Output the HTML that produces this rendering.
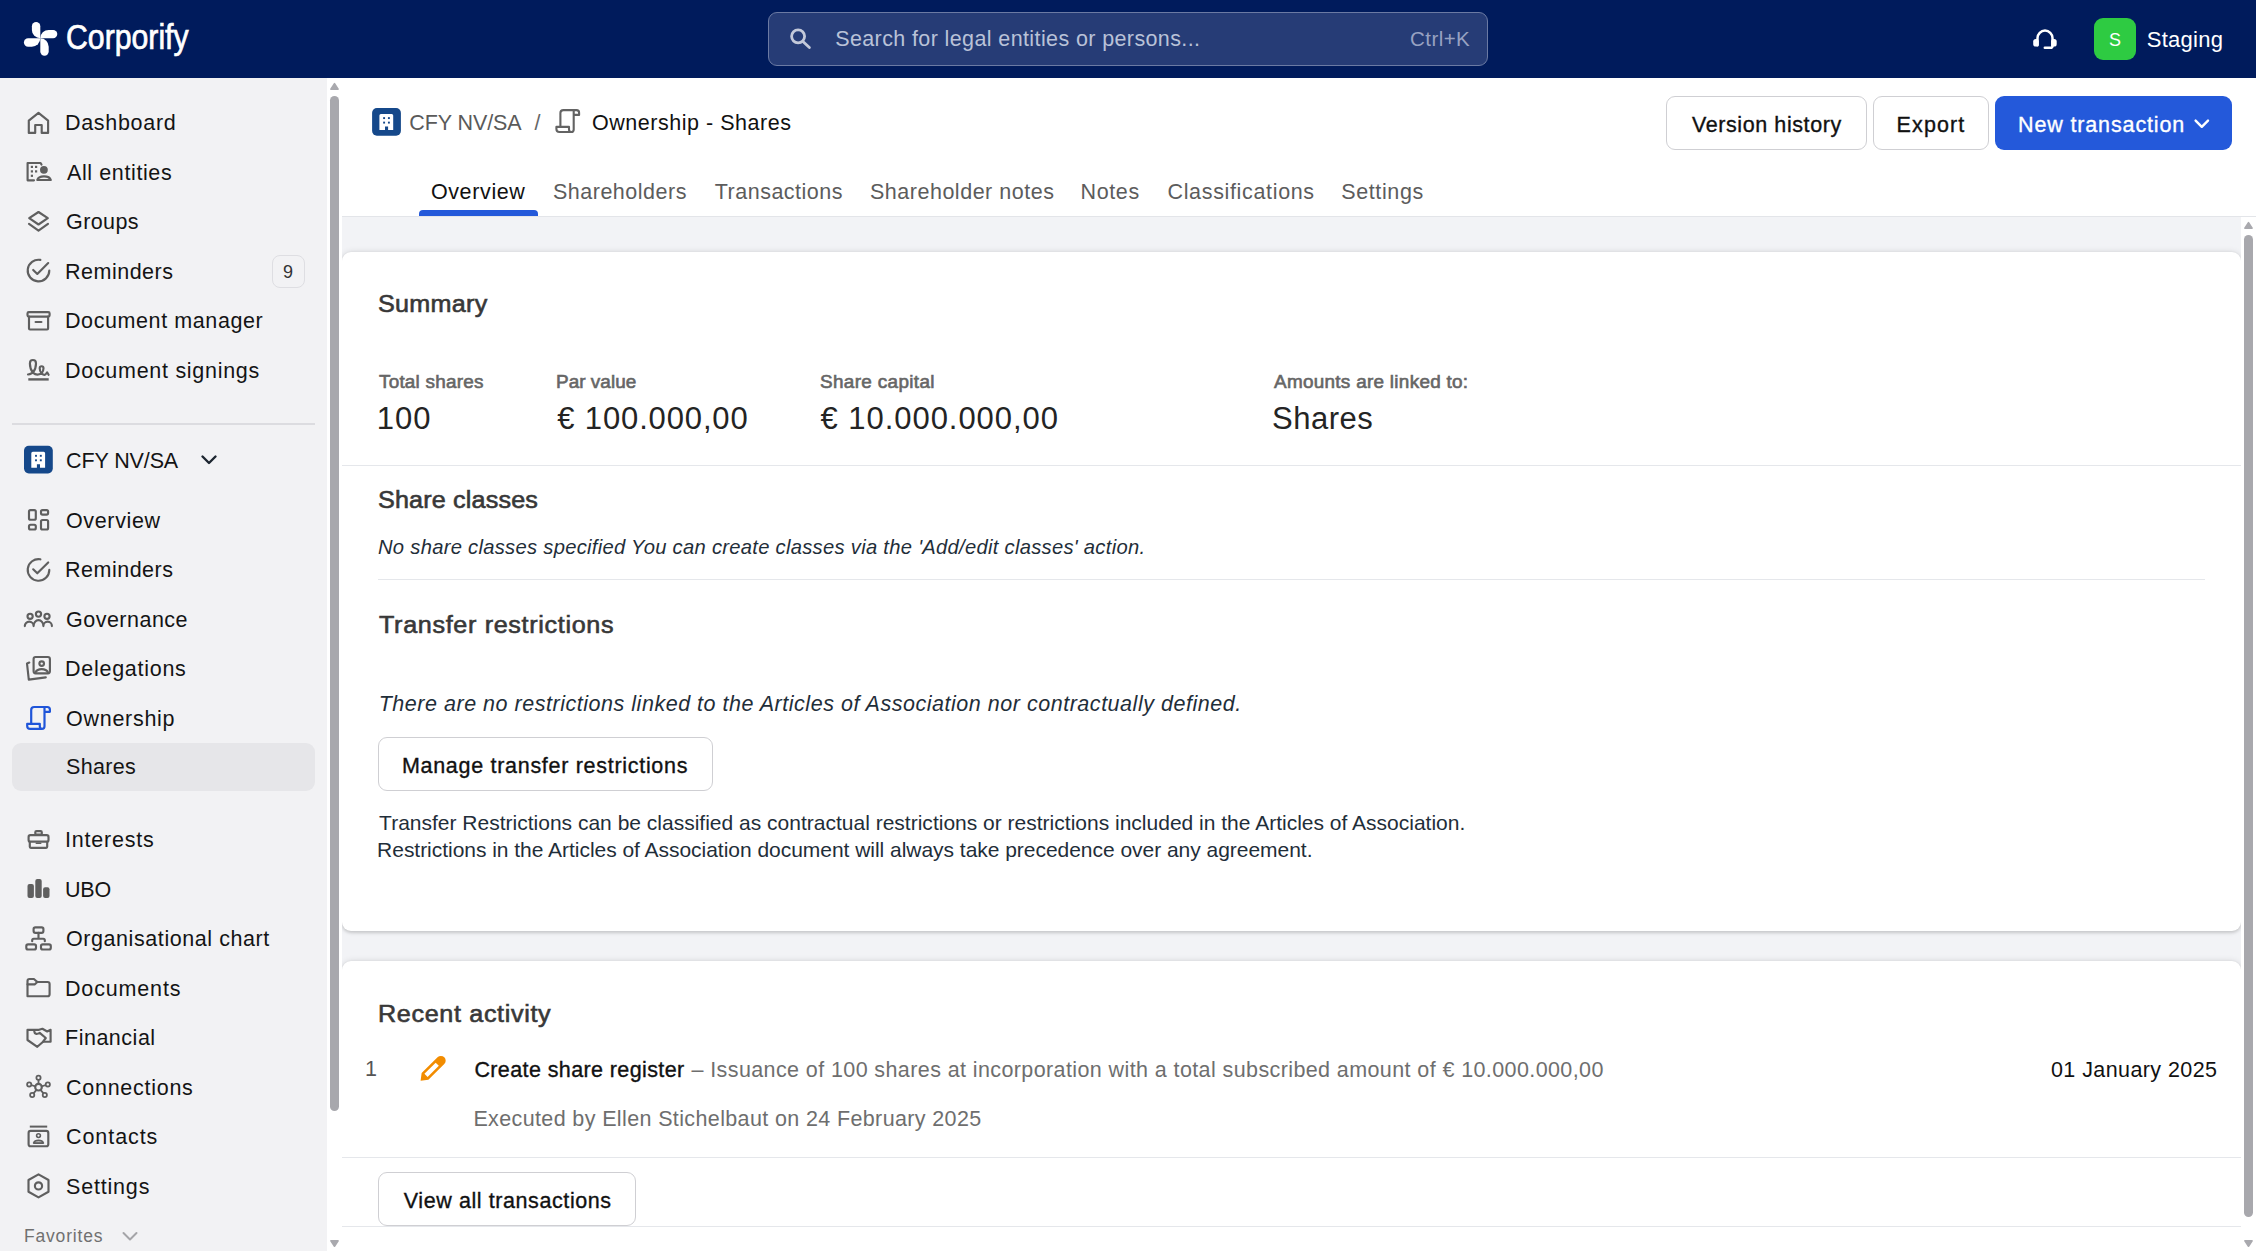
<!DOCTYPE html>
<html><head><meta charset="utf-8">
<style>
*{box-sizing:border-box;margin:0;padding:0}
html,body{width:2256px;height:1251px;overflow:hidden;font-family:"Liberation Sans",sans-serif;background:#fff;color:#111;position:relative}
.abs{position:absolute}
.tx{position:absolute;white-space:nowrap}
.card{position:absolute;left:0;width:1898.7px;background:#fff;border-radius:9px;box-shadow:0 0 6px rgba(0,0,0,.12),0 1.5px 3px rgba(0,0,0,.12)}
</style></head>
<body>
<div class="abs" style="left:0;top:0;width:2256px;height:78px;background:#001b5c"></div>
<svg class="abs" style="left:0;top:0;overflow:visible" width="1" height="1"><g fill="#fff"><path d="M40.3 38.3V26.2A4.2 4.2 0 0 0 31.9 26.2V29.9A8.4 8.4 0 0 0 40.3 38.3Z"/><path d="M40.3 38.3H53.1A4.2 4.2 0 0 0 53.1 29.9H48.7A8.4 8.4 0 0 0 40.3 38.3Z"/><path d="M40.3 38.3V51.5A4.2 4.2 0 0 0 48.7 51.5V46.7A8.4 8.4 0 0 0 40.3 38.3Z"/><path d="M40.3 38.3H28.1A4.2 4.2 0 0 0 28.1 46.7H31.9A8.4 8.4 0 0 0 40.3 38.3Z"/></g></svg>
<div class="tx" style="left:66.3px;top:15.45px;font-size:34.5px;line-height:45px;font-weight:400;font-style:normal;letter-spacing:0px;color:#fff;transform:scaleX(0.876);transform-origin:0 0;-webkit-text-stroke:0.7px #fff">Corporify</div>
<div class="abs" style="left:768px;top:12px;width:720px;height:54px;border-radius:9px;background:#263c76;border:1.5px solid #6b7aa3"></div>
<svg class="abs" style="left:0;top:0;overflow:visible" width="1" height="1"><g fill="none" stroke="#c3c9da" stroke-width="2.8" stroke-linecap="round"><circle cx="798.1" cy="36.3" r="6.5"/><path d="M803.2 41.8L809.4 47.6"/></g></svg>
<div class="tx" style="left:835.2px;top:25.15px;font-size:21.5px;line-height:28px;font-weight:400;font-style:normal;letter-spacing:0.387px;color:#b9c2d8;">Search for legal entities or persons...</div>
<div class="tx" style="left:1410.0px;top:25.10px;font-size:20.5px;line-height:27px;font-weight:400;font-style:normal;letter-spacing:0.44px;color:#98a2c2;">Ctrl+K</div>
<svg class="abs" style="left:0;top:0;overflow:visible" width="1" height="1"><g fill="none" stroke="#fff" stroke-width="2.5" stroke-linecap="round"><path d="M2037.5 45.3V38.1A7.5 7.5 0 0 1 2052.5 38.1V45.5"/><path d="M2052.5 45.5V46A1.8 1.8 0 0 1 2050.7 47.8H2044.8"/></g><g fill="#fff"><rect x="2033.2" y="39" width="5.6" height="7.5" rx="2.6"/><rect x="2051.1" y="39" width="5.6" height="7.5" rx="2.6"/></g></svg>
<div class="abs" style="left:2094px;top:18px;width:42px;height:42px;border-radius:9px;background:#2ecb42"></div>
<div class="tx" style="left:2109.0px;top:29.06px;font-size:18px;line-height:23px;font-weight:400;font-style:normal;letter-spacing:0px;color:#fff;">S</div>
<div class="tx" style="left:2146.8px;top:24.98px;font-size:22px;line-height:29px;font-weight:400;font-style:normal;letter-spacing:0.25px;color:#fff;">Staging</div>
<div class="abs" style="left:0;top:78px;width:327px;height:1173px;background:#f2f2f4"></div>
<div class="abs" style="left:327px;top:78px;width:15px;height:1173px;background:#fff"></div>
<svg class="abs" style="left:0;top:0;overflow:visible" width="1" height="1"><g fill="#a9a9ae" stroke="#a9a9ae" stroke-width="1.6" stroke-linejoin="round"><path d="M330.9 89.2L334.5 83.6L338.1 89.2Z"/><path d="M330.9 1240.8L334.5 1246.2L338.1 1240.8Z"/><path d="M2244.9 228.2L2248.5 222.6L2252.1 228.2Z"/><path d="M2244.9 1240.8L2248.5 1246.2L2252.1 1240.8Z"/></g></svg>
<div class="abs" style="left:330px;top:95.8px;width:9px;height:1015px;border-radius:5px;background:#a8a8ad"></div>
<div class="abs" style="left:12px;top:743px;width:303px;height:48px;border-radius:9px;background:#e6e6e9"></div>
<div class="tx" style="left:65.0px;top:109.25px;font-size:21.5px;line-height:28px;font-weight:400;font-style:normal;letter-spacing:0.688px;color:#141414;">Dashboard</div>
<div class="tx" style="left:67.0px;top:159.05px;font-size:21.5px;line-height:28px;font-weight:400;font-style:normal;letter-spacing:0.609px;color:#141414;">All entities</div>
<div class="tx" style="left:66.0px;top:208.35px;font-size:21.5px;line-height:28px;font-weight:400;font-style:normal;letter-spacing:0.42px;color:#141414;">Groups</div>
<div class="tx" style="left:65.0px;top:257.95px;font-size:21.5px;line-height:28px;font-weight:400;font-style:normal;letter-spacing:0.5px;color:#141414;">Reminders</div>
<div class="tx" style="left:65.0px;top:307.25px;font-size:21.5px;line-height:28px;font-weight:400;font-style:normal;letter-spacing:0.593px;color:#141414;">Document manager</div>
<div class="tx" style="left:65.0px;top:356.75px;font-size:21.5px;line-height:28px;font-weight:400;font-style:normal;letter-spacing:0.713px;color:#141414;">Document signings</div>
<div class="tx" style="left:66.0px;top:506.85px;font-size:21.5px;line-height:28px;font-weight:400;font-style:normal;letter-spacing:0.643px;color:#141414;">Overview</div>
<div class="tx" style="left:65.0px;top:555.95px;font-size:21.5px;line-height:28px;font-weight:400;font-style:normal;letter-spacing:0.5px;color:#141414;">Reminders</div>
<div class="tx" style="left:66.0px;top:606.05px;font-size:21.5px;line-height:28px;font-weight:400;font-style:normal;letter-spacing:0.489px;color:#141414;">Governance</div>
<div class="tx" style="left:65.0px;top:655.25px;font-size:21.5px;line-height:28px;font-weight:400;font-style:normal;letter-spacing:0.73px;color:#141414;">Delegations</div>
<div class="tx" style="left:66.0px;top:704.75px;font-size:21.5px;line-height:28px;font-weight:400;font-style:normal;letter-spacing:0.725px;color:#141414;">Ownership</div>
<div class="tx" style="left:65.0px;top:826.25px;font-size:21.5px;line-height:28px;font-weight:400;font-style:normal;letter-spacing:0.787px;color:#141414;">Interests</div>
<div class="tx" style="left:65.0px;top:875.75px;font-size:21.5px;line-height:28px;font-weight:400;font-style:normal;letter-spacing:-0.2px;color:#141414;">UBO</div>
<div class="tx" style="left:66.0px;top:925.05px;font-size:21.5px;line-height:28px;font-weight:400;font-style:normal;letter-spacing:0.574px;color:#141414;">Organisational chart</div>
<div class="tx" style="left:65.0px;top:974.95px;font-size:21.5px;line-height:28px;font-weight:400;font-style:normal;letter-spacing:0.838px;color:#141414;">Documents</div>
<div class="tx" style="left:65.0px;top:1024.25px;font-size:21.5px;line-height:28px;font-weight:400;font-style:normal;letter-spacing:0.512px;color:#141414;">Financial</div>
<div class="tx" style="left:66.0px;top:1074.05px;font-size:21.5px;line-height:28px;font-weight:400;font-style:normal;letter-spacing:0.73px;color:#141414;">Connections</div>
<div class="tx" style="left:66.0px;top:1123.15px;font-size:21.5px;line-height:28px;font-weight:400;font-style:normal;letter-spacing:0.929px;color:#141414;">Contacts</div>
<div class="tx" style="left:66.0px;top:1172.65px;font-size:21.5px;line-height:28px;font-weight:400;font-style:normal;letter-spacing:0.814px;color:#141414;">Settings</div>
<svg class="abs" style="left:0;top:0" width="340" height="1251" viewBox="0 0 340 1251"><path d="M35.2 132.9V125H41.7V132.9H48.1V120.7L38.5 112.8L28.8 120.7V132.9Z" fill="none" stroke="#5f5f5f" stroke-width="2.15" stroke-linecap="round" stroke-linejoin="round" stroke-linecap="butt"/><path d="M34 180.3H27.6V163H40.6L41.5 164.5" fill="none" stroke="#5f5f5f" stroke-width="2.15" stroke-linecap="round" stroke-linejoin="round"/><rect x="30.799999999999997" y="165.8" width="2.2" height="2.2" fill="#5f5f5f"/><rect x="35.0" y="165.8" width="2.2" height="2.2" fill="#5f5f5f"/><rect x="30.799999999999997" y="170.3" width="2.2" height="2.2" fill="#5f5f5f"/><rect x="35.0" y="170.3" width="2.2" height="2.2" fill="#5f5f5f"/><rect x="30.799999999999997" y="174.70000000000002" width="2.2" height="2.2" fill="#5f5f5f"/><circle cx="43.9" cy="169.8" r="3.9" fill="#5f5f5f"/><path d="M37.3 180C38 177.3 40.5 176.3 44 176.3S50 177.3 50.8 180Z" fill="none" stroke="#5f5f5f" stroke-width="2.2" stroke-linejoin="round"/><path d="M38.5 212L47.8 218.2L38.5 224.5L29.2 218.2Z" fill="none" stroke="#5f5f5f" stroke-width="2.15" stroke-linecap="round" stroke-linejoin="round"/><path d="M29 223.8L38.5 230.6L48 223.8" fill="none" stroke="#5f5f5f" stroke-width="2.15" stroke-linecap="round" stroke-linejoin="round" stroke-linecap="butt"/><path d="M40.4 259.9A10.8 10.8 0 1 0 49.3 270.5" fill="none" stroke="#5f5f5f" stroke-width="2.15" stroke-linecap="round" stroke-linejoin="round"/><path d="M33.2 269.9L37.3 273.9L48.2 263.1" fill="none" stroke="#5f5f5f" stroke-width="2.15" stroke-linecap="round" stroke-linejoin="round"/><path d="M40.4 559.3A10.8 10.8 0 1 0 49.3 569.9" fill="none" stroke="#5f5f5f" stroke-width="2.15" stroke-linecap="round" stroke-linejoin="round"/><path d="M33.2 569.3L37.3 573.3L48.2 562.5" fill="none" stroke="#5f5f5f" stroke-width="2.15" stroke-linecap="round" stroke-linejoin="round"/><rect x="27.5" y="312.1" width="22.1" height="4.5" rx="1.3" fill="none" stroke="#5f5f5f" stroke-width="2.15" stroke-linecap="round" stroke-linejoin="round"/><path d="M29 316.6V328.5A1 1 0 0 0 30 329.5H47.1A1 1 0 0 0 48.1 328.5V316.6" fill="none" stroke="#5f5f5f" stroke-width="2.15" stroke-linecap="round" stroke-linejoin="round"/><path d="M35.6 322H41.4" fill="none" stroke="#5f5f5f" stroke-width="2.15" stroke-linecap="round" stroke-linejoin="round"/><path d="M28 374.5C29.8 374.3 31.3 373.4 32.9 372.6C30.8 370 29.9 366 29.9 363.4C29.9 360.9 31.2 360 32.9 360C34.6 360 36 360.9 36 363.4C36 366 35 370 32.9 372.6C34.5 374 36 374.6 37.3 374.6C38.8 374.6 40.2 374.1 41.5 373.4C40.2 371.8 39.7 369.6 39.7 368.3C39.7 366.9 40.5 366.2 41.6 366.2C42.7 366.2 43.5 366.9 43.5 368.3C43.5 369.6 43 371.8 41.5 373.4C42.5 374.3 43.5 374.9 44.6 374.9C45.8 374.9 46.5 373.1 47.1 372.3L48.6 374.8" fill="none" stroke="#5f5f5f" stroke-width="2.15" stroke-linecap="round" stroke-linejoin="round"/><path d="M28.3 379.4H48.7" fill="none" stroke="#5f5f5f" stroke-width="2.4"/><rect x="29" y="510.1" width="6.8" height="9.6" rx="1.5" fill="none" stroke="#5f5f5f" stroke-width="2.15" stroke-linecap="round" stroke-linejoin="round"/><rect x="41" y="510.1" width="7.1" height="4.5" rx="1.5" fill="none" stroke="#5f5f5f" stroke-width="2.15" stroke-linecap="round" stroke-linejoin="round"/><rect x="29" y="524.7" width="6.8" height="4.8" rx="1.5" fill="none" stroke="#5f5f5f" stroke-width="2.15" stroke-linecap="round" stroke-linejoin="round"/><rect x="41" y="520" width="7.1" height="9.5" rx="1.5" fill="none" stroke="#5f5f5f" stroke-width="2.15" stroke-linecap="round" stroke-linejoin="round"/><circle cx="30.1" cy="616.3" r="2.6" fill="none" stroke="#5f5f5f" stroke-width="2.15" stroke-linecap="round" stroke-linejoin="round"/><circle cx="38.5" cy="614.1" r="2.6" fill="none" stroke="#5f5f5f" stroke-width="2.15" stroke-linecap="round" stroke-linejoin="round"/><circle cx="47" cy="616.3" r="2.6" fill="none" stroke="#5f5f5f" stroke-width="2.15" stroke-linecap="round" stroke-linejoin="round"/><path d="M24.8 626.1A4.4 4.4 0 0 1 33.6 626.1M33.6 626.1A4.9 6 0 0 1 43.4 626.1M43.4 626.1A4.25 4.4 0 0 1 51.9 626.1" fill="none" stroke="#5f5f5f" stroke-width="2.15" stroke-linecap="round" stroke-linejoin="round"/><rect x="33.6" y="657" width="16.3" height="16.3" rx="2" fill="none" stroke="#5f5f5f" stroke-width="2.15" stroke-linecap="round" stroke-linejoin="round"/><circle cx="41.7" cy="663.6" r="2.3" fill="none" stroke="#5f5f5f" stroke-width="2.15" stroke-linecap="round" stroke-linejoin="round"/><path d="M35.5 672.2C36.5 670.2 38.8 669.1 41.7 669.1S46.9 670.2 47.9 672.2" fill="none" stroke="#5f5f5f" stroke-width="2.15" stroke-linecap="round" stroke-linejoin="round"/><path d="M29.3 662.6L27 663.5L28.8 679.6L45.8 677.4" fill="none" stroke="#5f5f5f" stroke-width="2.15" stroke-linecap="round" stroke-linejoin="round"/><g transform="translate(0 0)"><path d="M31.2 723.8V710A3 3 0 0 1 34.2 707H47.3A2.6 2.6 0 0 1 49.9 709.6V711.8H44.5M44.5 707V726.3A2.6 2.6 0 0 1 41.9 728.9H30.2A3 3 0 0 1 27.2 725.9V723.8H39.8V726.3A2.6 2.6 0 0 0 42.4 728.9" fill="none" stroke="#1f55d9" stroke-width="2.2" stroke-linejoin="round"/></g><rect x="35.3" y="831.1" width="6.5" height="3.5" rx="1.2" fill="none" stroke="#5f5f5f" stroke-width="2.15" stroke-linecap="round" stroke-linejoin="round"/><rect x="28.6" y="835.1" width="19.9" height="6.6" rx="1.8" fill="none" stroke="#5f5f5f" stroke-width="2.15" stroke-linecap="round" stroke-linejoin="round"/><path d="M29.8 841.7V846.8A1 1 0 0 0 30.8 847.8H46.2A1 1 0 0 0 47.2 846.8V841.7" fill="none" stroke="#5f5f5f" stroke-width="2.15" stroke-linecap="round" stroke-linejoin="round"/><path d="M36.3 843.2H40.7" fill="none" stroke="#5f5f5f" stroke-width="1.6" stroke-linecap="round"/><rect x="27.5" y="884.1" width="6.4" height="14" rx="2" fill="#5f5f5f"/><rect x="35.3" y="879" width="6.4" height="19.1" rx="2" fill="#5f5f5f"/><rect x="43.1" y="887.2" width="6.4" height="10.9" rx="2" fill="#5f5f5f"/><rect x="33.6" y="927.3" width="9.8" height="5.6" rx="1.8" fill="none" stroke="#5f5f5f" stroke-width="2.15" stroke-linecap="round" stroke-linejoin="round"/><rect x="26.3" y="944.3" width="9.7" height="5.2" rx="1.8" fill="none" stroke="#5f5f5f" stroke-width="2.15" stroke-linecap="round" stroke-linejoin="round"/><rect x="41" y="944.3" width="9.8" height="5.2" rx="1.8" fill="none" stroke="#5f5f5f" stroke-width="2.15" stroke-linecap="round" stroke-linejoin="round"/><path d="M38.5 932.9V938.7M32.2 941.2V940.2A1.5 1.5 0 0 1 33.7 938.7H43.3A1.5 1.5 0 0 1 44.8 940.2V941.2" fill="none" stroke="#5f5f5f" stroke-width="2.15" stroke-linecap="round" stroke-linejoin="round" stroke-linecap="butt"/><path d="M27.5 996.2V981A2 2 0 0 1 29.5 979H33.9L37.3 982H47.6A2 2 0 0 1 49.6 984V994.2A2 2 0 0 1 47.6 996.2Z" fill="none" stroke="#5f5f5f" stroke-width="2.15" stroke-linecap="round" stroke-linejoin="round"/><path d="M27.5 984.3H34.9L37.3 982" fill="none" stroke="#5f5f5f" stroke-width="2.15" stroke-linecap="round" stroke-linejoin="round"/><path d="M27.5 1029.8H39M27.5 1029.8V1040L37.3 1046.8L43.1 1041.7H50.6V1029.8L47.2 1031.5L42.4 1028.8L39 1029.8" fill="none" stroke="#5f5f5f" stroke-width="2.15" stroke-linecap="round" stroke-linejoin="round"/><path d="M34.3 1031.5C34.6 1033.8 36.4 1034.8 39.7 1032.9L45.8 1038L43.1 1041.7" fill="none" stroke="#5f5f5f" stroke-width="2.15" stroke-linecap="round" stroke-linejoin="round"/><circle cx="38.5" cy="1087.2" r="3.3" fill="none" stroke="#5f5f5f" stroke-width="2.15" stroke-linecap="round" stroke-linejoin="round"/><circle cx="38.5" cy="1077.7" r="2.1" fill="none" stroke="#5f5f5f" stroke-width="1.8"/><circle cx="29.2" cy="1084.4" r="2.1" fill="none" stroke="#5f5f5f" stroke-width="1.8"/><circle cx="47.8" cy="1084.4" r="2.1" fill="none" stroke="#5f5f5f" stroke-width="1.8"/><circle cx="32.2" cy="1095" r="2.1" fill="none" stroke="#5f5f5f" stroke-width="1.8"/><circle cx="44.8" cy="1095" r="2.1" fill="none" stroke="#5f5f5f" stroke-width="1.8"/><path d="M38.5 1079.8V1083.9M31.2 1085L35.3 1086.3M45.8 1085L41.7 1086.3M33.5 1093.3L36.5 1089.8M43.5 1093.3L40.5 1089.8" fill="none" stroke="#5f5f5f" stroke-width="1.8"/><path d="M29.8 1126.6H47.2" fill="none" stroke="#5f5f5f" stroke-width="2"/><rect x="28.6" y="1130.9" width="19.7" height="15.3" rx="2" fill="none" stroke="#5f5f5f" stroke-width="2.15" stroke-linecap="round" stroke-linejoin="round"/><circle cx="38.5" cy="1135.6" r="1.9" fill="none" stroke="#5f5f5f" stroke-width="1.6"/><path d="M33.6 1143.1C34.3 1141.2 36 1140.3 38.5 1140.3S42.7 1141.2 43.4 1143.1Z" fill="#b5b5b5" stroke="#5f5f5f" stroke-width="1.6" stroke-linejoin="round"/><path d="M38.5 1174.4L48.5 1180V1191.7L38.5 1197.4L28.5 1191.7V1180Z" fill="none" stroke="#5f5f5f" stroke-width="2.15" stroke-linecap="round" stroke-linejoin="round"/><circle cx="38.5" cy="1185.9" r="3.6" fill="none" stroke="#5f5f5f" stroke-width="2.15" stroke-linecap="round" stroke-linejoin="round"/></svg>
<div class="abs" style="left:272px;top:255px;width:33px;height:33px;border:1.5px solid #dedee2;border-radius:8px"></div>
<div class="tx" style="left:283.0px;top:260.96px;font-size:18px;line-height:23px;font-weight:400;font-style:normal;letter-spacing:0px;color:#333;">9</div>
<div class="abs" style="left:12px;top:423px;width:303px;height:2px;background:#dcdce0"></div>
<svg class="abs" style="left:0;top:0;overflow:visible" width="1" height="1"><g transform="translate(-348.1 337.7)"><rect x="372.1" y="108.1" width="28.8" height="27.6" rx="4.8" fill="#15488a"/><path d="M379.4 130.1V115.5A1.5 1.5 0 0 1 380.9 114H391.7A1.5 1.5 0 0 1 393.2 115.5V130.1H388.1V126.6H385V130.1Z" fill="#fff"/><rect x="383.15" y="117.15" width="1.9" height="1.9" fill="#15488a"/><rect x="387.95" y="117.15" width="1.9" height="1.9" fill="#15488a"/><rect x="383.15" y="121.65" width="1.9" height="1.9" fill="#15488a"/><rect x="387.95" y="121.65" width="1.9" height="1.9" fill="#15488a"/></g></svg>
<div class="tx" style="left:66.0px;top:447.25px;font-size:21.5px;line-height:28px;font-weight:400;font-style:normal;letter-spacing:-0.113px;color:#141414;">CFY NV/SA</div>
<svg class="abs" style="left:200px;top:451px" width="18" height="18" viewBox="0 0 18 18"><path d="M2.5 5.5l6.5 6.5 6.5-6.5" fill="none" stroke="#1d2630" stroke-width="2.4" stroke-linecap="round" stroke-linejoin="round"/></svg>
<div class="tx" style="left:66.0px;top:752.75px;font-size:21.5px;line-height:28px;font-weight:400;font-style:normal;letter-spacing:0.32px;color:#141414;">Shares</div>
<div class="tx" style="left:24.0px;top:1225.34px;font-size:17.5px;line-height:23px;font-weight:400;font-style:normal;letter-spacing:0.812px;color:#707070;">Favorites</div>
<svg class="abs" style="left:121px;top:1229px" width="18" height="14" viewBox="0 0 18 14"><path d="M2.5 4l6.5 6.5 6.5-6.5" fill="none" stroke="#a5a5a8" stroke-width="2" stroke-linecap="round" stroke-linejoin="round"/></svg>
<svg class="abs" style="left:0;top:0;overflow:visible" width="1" height="1"><g transform="translate(0 0)"><rect x="372.1" y="108.1" width="28.8" height="27.6" rx="4.8" fill="#15488a"/><path d="M379.4 130.1V115.5A1.5 1.5 0 0 1 380.9 114H391.7A1.5 1.5 0 0 1 393.2 115.5V130.1H388.1V126.6H385V130.1Z" fill="#fff"/><rect x="383.15" y="117.15" width="1.9" height="1.9" fill="#15488a"/><rect x="387.95" y="117.15" width="1.9" height="1.9" fill="#15488a"/><rect x="383.15" y="121.65" width="1.9" height="1.9" fill="#15488a"/><rect x="387.95" y="121.65" width="1.9" height="1.9" fill="#15488a"/></g></svg>
<div class="tx" style="left:409.3px;top:109.35px;font-size:21.5px;line-height:28px;font-weight:400;font-style:normal;letter-spacing:-0.1px;color:#5a5a5a;">CFY NV/SA</div>
<div class="tx" style="left:534.6px;top:109.35px;font-size:21.5px;line-height:28px;font-weight:400;font-style:normal;letter-spacing:0px;color:#666;">/</div>
<svg class="abs" style="left:0;top:0;overflow:visible" width="1" height="1"><g transform="translate(529.2 -596.9)"><path d="M31.2 723.8V710A3 3 0 0 1 34.2 707H47.3A2.6 2.6 0 0 1 49.9 709.6V711.8H44.5M44.5 707V726.3A2.6 2.6 0 0 1 41.9 728.9H30.2A3 3 0 0 1 27.2 725.9V723.8H39.8V726.3A2.6 2.6 0 0 0 42.4 728.9" fill="none" stroke="#636363" stroke-width="2.1" stroke-linejoin="round"/></g></svg>
<div class="tx" style="left:592.0px;top:109.35px;font-size:21.5px;line-height:28px;font-weight:400;font-style:normal;letter-spacing:0.529px;color:#111;">Ownership - Shares</div>
<div class="abs" style="left:1666px;top:96px;width:201px;height:54px;border:1.5px solid #cfcfd3;border-radius:9px;background:#fff"></div>
<div class="tx" style="left:1692.0px;top:111.35px;font-size:21.5px;line-height:28px;font-weight:400;font-style:normal;letter-spacing:0.586px;color:#111;-webkit-text-stroke:0.35px currentColor;">Version history</div>
<div class="abs" style="left:1873px;top:96px;width:116px;height:54px;border:1.5px solid #cfcfd3;border-radius:9px;background:#fff"></div>
<div class="tx" style="left:1896.6px;top:111.35px;font-size:21.5px;line-height:28px;font-weight:400;font-style:normal;letter-spacing:1.1px;color:#111;-webkit-text-stroke:0.35px currentColor;">Export</div>
<div class="abs" style="left:1995px;top:96px;width:237px;height:54px;border-radius:9px;background:#2459da"></div>
<div class="tx" style="left:2018.0px;top:111.35px;font-size:21.5px;line-height:28px;font-weight:400;font-style:normal;letter-spacing:0.864px;color:#fff;-webkit-text-stroke:0.35px currentColor;">New transaction</div>
<svg class="abs" style="left:0;top:0;overflow:visible" width="1" height="1"><path d="M2195.6 120.6L2201.8 126.8L2208 120.6" fill="none" stroke="#fff" stroke-width="2.4" stroke-linecap="round" stroke-linejoin="round"/></svg>
<div class="tx" style="left:430.9px;top:178.35px;font-size:21.5px;line-height:28px;font-weight:400;font-style:normal;letter-spacing:0.629px;color:#111;">Overview</div>
<div class="tx" style="left:553.0px;top:178.35px;font-size:21.5px;line-height:28px;font-weight:400;font-style:normal;letter-spacing:0.5px;color:#5c5c5c;">Shareholders</div>
<div class="tx" style="left:714.8px;top:178.35px;font-size:21.5px;line-height:28px;font-weight:400;font-style:normal;letter-spacing:0.491px;color:#5c5c5c;">Transactions</div>
<div class="tx" style="left:870.0px;top:178.35px;font-size:21.5px;line-height:28px;font-weight:400;font-style:normal;letter-spacing:0.512px;color:#5c5c5c;">Shareholder notes</div>
<div class="tx" style="left:1080.5px;top:178.35px;font-size:21.5px;line-height:28px;font-weight:400;font-style:normal;letter-spacing:0.625px;color:#5c5c5c;">Notes</div>
<div class="tx" style="left:1167.5px;top:178.35px;font-size:21.5px;line-height:28px;font-weight:400;font-style:normal;letter-spacing:0.657px;color:#5c5c5c;">Classifications</div>
<div class="tx" style="left:1341.3px;top:178.35px;font-size:21.5px;line-height:28px;font-weight:400;font-style:normal;letter-spacing:0.6px;color:#5c5c5c;">Settings</div>
<div class="abs" style="left:419.2px;top:210px;width:118.8px;height:6px;border-radius:4px 4px 0 0;background:#2459da"></div>
<div class="abs" style="left:342px;top:215.5px;width:1914px;height:1.5px;background:#e3e5e9"></div>
<div class="abs" style="left:342px;top:217px;width:1899px;height:1034px;background:#f2f3f6;overflow:hidden"><div class="card" style="top:35px;height:679px"></div><div class="card" style="top:744px;height:400px"></div></div>
<div class="abs" style="left:2244px;top:235px;width:9px;height:982px;border-radius:5px;background:#a8a8ad"></div>
<div class="tx" style="left:377.8px;top:289.06px;font-size:23.5px;line-height:31px;font-weight:400;font-style:normal;letter-spacing:0.258px;color:#383838;-webkit-text-stroke:0.6px currentColor;transform:scaleX(1.07);transform-origin:0 0;">Summary</div>
<div class="tx" style="left:378.8px;top:370.96px;font-size:18px;line-height:23px;font-weight:400;font-style:normal;letter-spacing:0.21px;color:#666;-webkit-text-stroke:0.6px currentColor;transform:scaleX(1.05);transform-origin:0 0;">Total shares</div>
<div class="tx" style="left:556.3px;top:370.96px;font-size:18px;line-height:23px;font-weight:400;font-style:normal;letter-spacing:0.044px;color:#666;-webkit-text-stroke:0.6px currentColor;transform:scaleX(1.05);transform-origin:0 0;">Par value</div>
<div class="tx" style="left:819.5px;top:370.96px;font-size:18px;line-height:23px;font-weight:400;font-style:normal;letter-spacing:0.327px;color:#666;-webkit-text-stroke:0.6px currentColor;transform:scaleX(1.05);transform-origin:0 0;">Share capital</div>
<div class="tx" style="left:1274.1px;top:370.96px;font-size:18px;line-height:23px;font-weight:400;font-style:normal;letter-spacing:0.275px;color:#666;-webkit-text-stroke:0.6px currentColor;transform:scaleX(1.05);transform-origin:0 0;">Amounts are linked to:</div>
<div class="tx" style="left:376.8px;top:399.06px;font-size:31px;line-height:40px;font-weight:400;font-style:normal;letter-spacing:1.0px;color:#242424;">100</div>
<div class="tx" style="left:557.3px;top:399.06px;font-size:31px;line-height:40px;font-weight:400;font-style:normal;letter-spacing:0.855px;color:#242424;">€ 100.000,00</div>
<div class="tx" style="left:820.5px;top:399.06px;font-size:31px;line-height:40px;font-weight:400;font-style:normal;letter-spacing:0.957px;color:#242424;">€ 10.000.000,00</div>
<div class="tx" style="left:1272.1px;top:399.06px;font-size:31px;line-height:40px;font-weight:400;font-style:normal;letter-spacing:0.48px;color:#242424;">Shares</div>
<div class="abs" style="left:342px;top:464.5px;width:1899px;height:1.5px;background:#e5e7eb"></div>
<div class="tx" style="left:378.3px;top:484.76px;font-size:23.5px;line-height:31px;font-weight:400;font-style:normal;letter-spacing:0.151px;color:#383838;-webkit-text-stroke:0.6px currentColor;transform:scaleX(1.07);transform-origin:0 0;">Share classes</div>
<div class="tx" style="left:378.0px;top:533.70px;font-size:20.2px;line-height:26px;font-weight:400;font-style:italic;letter-spacing:0.284px;color:#1f2e39;">No share classes specified You can create classes via the 'Add/edit classes' action.</div>
<div class="abs" style="left:378px;top:578.5px;width:1827px;height:1.5px;background:#e5e7eb"></div>
<div class="tx" style="left:379.0px;top:610.16px;font-size:23.5px;line-height:31px;font-weight:400;font-style:normal;letter-spacing:0.623px;color:#383838;-webkit-text-stroke:0.6px currentColor;transform:scaleX(1.07);transform-origin:0 0;">Transfer restrictions</div>
<div class="tx" style="left:378.7px;top:690.35px;font-size:21.5px;line-height:28px;font-weight:400;font-style:italic;letter-spacing:0.524px;color:#1f2e39;">There are no restrictions linked to the Articles of Association nor contractually defined.</div>
<div class="abs" style="left:378px;top:737px;width:335px;height:54px;border:1.5px solid #cfcfd3;border-radius:9px;background:#fff"></div>
<div class="tx" style="left:401.9px;top:751.75px;font-size:21.5px;line-height:28px;font-weight:400;font-style:normal;letter-spacing:0.707px;color:#111;-webkit-text-stroke:0.35px currentColor;">Manage transfer restrictions</div>
<div class="tx" style="left:379.1px;top:808.92px;font-size:21px;line-height:27px;font-weight:400;font-style:normal;letter-spacing:0.003px;color:#1f2e39;">Transfer Restrictions can be classified as contractual restrictions or restrictions included in the Articles of Association.</div>
<div class="tx" style="left:377.1px;top:836.42px;font-size:21px;line-height:27px;font-weight:400;font-style:normal;letter-spacing:-0.031px;color:#1f2e39;">Restrictions in the Articles of Association document will always take precedence over any agreement.</div>
<div class="tx" style="left:377.5px;top:998.86px;font-size:23.5px;line-height:31px;font-weight:400;font-style:normal;letter-spacing:0.613px;color:#383838;-webkit-text-stroke:0.6px currentColor;transform:scaleX(1.07);transform-origin:0 0;">Recent activity</div>
<div class="tx" style="left:365.1px;top:1055.15px;font-size:21.5px;line-height:28px;font-weight:400;font-style:normal;letter-spacing:0px;color:#555;">1</div>
<svg class="abs" style="left:0;top:0;overflow:visible" width="1" height="1"><g transform="translate(420.6 1080.7) rotate(-44.6)" fill="#f28c00"><path d="M0 0L6.2 -4.8H28.5A4.8 4.8 0 0 1 28.5 4.8H6.2Z"/><rect x="7.6" y="-2.25" width="15.8" height="4.5" fill="#fff"/></g></svg>
<div class="tx" style="left:474.4px;top:1055.85px;font-size:21.5px;line-height:28px;font-weight:400;font-style:normal;letter-spacing:0.395px;color:#111;-webkit-text-stroke:0.35px currentColor;">Create share register</div>
<div class="tx" style="left:691.5px;top:1055.85px;font-size:21.5px;line-height:28px;font-weight:400;font-style:normal;letter-spacing:0.398px;color:#6e6e6e;">– Issuance of 100 shares at incorporation with a total subscribed amount of € 10.000.000,00</div>
<div class="tx" style="left:2051.0px;top:1055.85px;font-size:21.5px;line-height:28px;font-weight:400;font-style:normal;letter-spacing:0.414px;color:#111;">01 January 2025</div>
<div class="tx" style="left:473.4px;top:1104.65px;font-size:21.5px;line-height:28px;font-weight:400;font-style:normal;letter-spacing:0.371px;color:#6e6e6e;">Executed by Ellen Stichelbaut on 24 February 2025</div>
<div class="abs" style="left:342px;top:1156.5px;width:1899px;height:1.5px;background:#e5e7eb"></div>
<div class="abs" style="left:378px;top:1172px;width:258px;height:54px;border:1.5px solid #cfcfd3;border-radius:9px;background:#fff"></div>
<div class="tx" style="left:403.8px;top:1187.25px;font-size:21.5px;line-height:28px;font-weight:400;font-style:normal;letter-spacing:0.585px;color:#111;-webkit-text-stroke:0.35px currentColor;">View all transactions</div>
<div class="abs" style="left:342px;top:1225.5px;width:1899px;height:1.5px;background:#e5e7eb"></div>
</body></html>
